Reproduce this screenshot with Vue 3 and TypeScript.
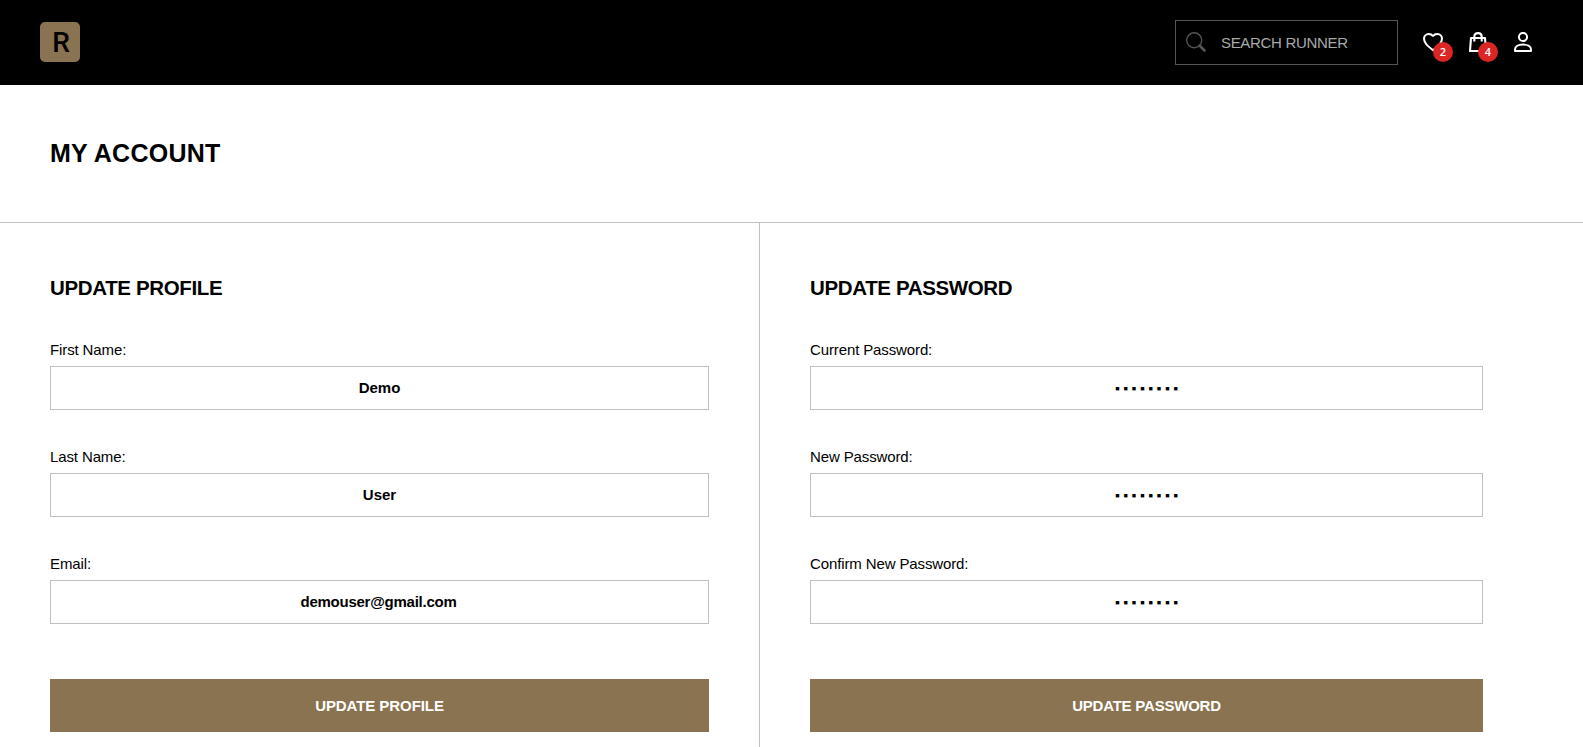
<script setup lang="ts">
interface Field {
  id: string
  label: string
  kind: string
  value: string
}

interface FormPanel {
  name: string
  title: string
  fields: Field[]
}

const mask = '■'.repeat(8)

const panels: FormPanel[] = [
  {
    name: 'profile',
    title: 'UPDATE PROFILE',
    fields: [
      { id: 'first-name', label: 'First Name:', kind: 'name', value: 'Demo' },
      { id: 'last-name', label: 'Last Name:', kind: 'name', value: 'User' },
      { id: 'email', label: 'Email:', kind: 'email', value: 'demouser@gmail.com' },
    ],
  },
  {
    name: 'password',
    title: 'UPDATE PASSWORD',
    fields: [
      { id: 'current-password', label: 'Current Password:', kind: 'masked', value: mask },
      { id: 'new-password', label: 'New Password:', kind: 'masked', value: mask },
      { id: 'confirm-password', label: 'Confirm New Password:', kind: 'masked', value: mask },
    ],
  },
]
</script>

<template>
  <div class="page">
    <header class="topbar">
      <a class="logo">R</a>
      <div class="tools">
        <label class="search">
          <svg width="20" height="20" viewBox="0 0 20 20" fill="none" stroke="#555">
            <circle cx="8.2" cy="8.2" r="7.5" stroke-width="1.4" />
            <path d="M13.8 13.8L18.5 18.5" stroke-width="2.7" stroke-linecap="round" />
          </svg>
          <input type="text" placeholder="SEARCH RUNNER" />
        </label>
        <nav class="icons">
          <a class="icon">
            <svg width="20" height="20" viewBox="0 0 20 20" fill="none" stroke="#fff" stroke-width="2" stroke-linejoin="round">
              <path d="M10 18.2C5 14.3 1 11.2 1 6.8C1 4 3 2 5.6 2C7.4 2 9 2.6 10 4C11 2.6 12.6 2 14.4 2C17 2 19 4 19 6.8C19 11.2 15 14.3 10 18.2Z" />
            </svg>
            <span class="badge">2</span>
          </a>
          <a class="icon">
            <svg width="20" height="20" viewBox="0 0 20 20" fill="none" stroke="#fff" stroke-width="2.1" stroke-linejoin="round">
              <path d="M3 6H17L18 19H2Z" />
              <path d="M6.3 9.5V5C6.3 2.6 7.8 1.1 10 1.1S13.7 2.6 13.7 5V9.5" />
            </svg>
            <span class="badge">4</span>
          </a>
          <a class="icon">
            <svg width="20" height="20" viewBox="0 0 20 20" fill="none" stroke="#fff" stroke-width="2">
              <circle cx="10" cy="5" r="4.1" />
              <path d="M2 19V17.6C2 14.6 5.4 12.6 10 12.6S18 14.6 18 17.6V19Z" stroke-linejoin="round" />
            </svg>
          </a>
        </nav>
      </div>
    </header>

    <h1 class="title">MY ACCOUNT</h1>

    <main class="panels">
      <form v-for="panel in panels" :key="panel.name" :class="['panel', panel.name]" @submit.prevent>
        <h2>{{ panel.title }}</h2>
        <div v-for="field in panel.fields" :key="field.id" class="field">
          <label :for="field.id">{{ field.label }}</label>
          <input :id="field.id" :class="field.kind" type="text" :value="field.value" />
        </div>
        <button type="submit">{{ panel.title }}</button>
      </form>
    </main>
  </div>
</template>

<style>
body {
  overflow: hidden;
  background: #fff;
}
</style>

<style scoped>
.page,
.page * {
  box-sizing: border-box;
}
.page {
  display: flex;
  flex-direction: column;
  height: 100vh;
  overflow: hidden;
  color: #000;
  font-family: "Liberation Sans", Arial, sans-serif;
  font-size: 15px;
}
.topbar {
  flex: none;
  display: flex;
  align-items: center;
  justify-content: space-between;
  height: 85px;
  padding: 0 50px 0 40px;
  background: #000;
}
.logo {
  width: 40px;
  height: 40px;
  margin-bottom: 1px;
  padding-left: 2px;
  border-radius: 5px;
  background: #8a7350;
  font: 500 28px/42px Roboto, sans-serif;
  text-align: center;
}
.tools {
  display: flex;
  align-items: center;
  gap: 25px;
}
.search {
  display: flex;
  align-items: center;
  gap: 15px;
  width: 223px;
  height: 45px;
  padding: 0 10px;
  border: 1px solid #555;
}
.search svg {
  flex: none;
  margin-bottom: 1px;
}
.search input {
  min-width: 0;
  width: 100%;
  padding: 0;
  border: 0;
  outline: 0;
  background: transparent;
  color: #fff;
  font: 15px "Liberation Sans", Arial, sans-serif;
  letter-spacing: -0.32px;
}
.search input::placeholder {
  color: #a9a9a9;
}
.icons {
  display: flex;
  gap: 25px;
}
.icon {
  position: relative;
  width: 20px;
  height: 20px;
  margin-bottom: 1px;
}
.icon svg {
  display: block;
}
.badge {
  position: absolute;
  left: 10px;
  top: 10px;
  width: 20px;
  height: 20px;
  border-radius: 50%;
  background: #dc2626;
  color: #fff;
  font: 600 11px/20px "Open Sans", sans-serif;
  text-align: center;
}
.title {
  flex: none;
  height: 138px;
  margin: 0;
  padding: 0 50px;
  border-bottom: 1px solid #c0c0c0;
  font-size: 25px;
  line-height: 137px;
  letter-spacing: 0.25px;
}
.panels {
  flex: 1;
  display: flex;
}
.panel {
  width: 760px;
  padding: 50px 50px 0;
}
.profile {
  border-right: 1px solid #c0c0c0;
}
.password {
  width: 773px;
}
.panel h2 {
  height: 28px;
  margin: 0 0 40px;
  font-size: 20.5px;
  line-height: 30px;
  letter-spacing: -0.36px;
}
.field {
  display: flex;
  flex-direction: column;
  gap: 8px;
  margin-bottom: 38px;
}
.field label {
  height: 17px;
  line-height: 17px;
  letter-spacing: -0.12px;
}
.field input {
  height: 44px;
  padding: 0 10px 2px;
  border: 1px solid #c0c0c0;
  outline: 0;
  background: #fff;
  color: #000;
  font: bold 15px "Liberation Sans", Arial, sans-serif;
  text-align: center;
}
.field .email {
  padding-right: 12px;
  letter-spacing: -0.25px;
}
.field .masked {
  padding: 0 10px 0 14px;
  font-size: 7px;
  letter-spacing: 4.1px;
}
.panel button {
  display: block;
  width: 100%;
  height: 53px;
  margin-top: 55px;
  border: 0;
  background: #8a7350;
  color: #fff;
  font: bold 15px "Liberation Sans", Arial, sans-serif;
  letter-spacing: -0.07px;
}
.password button {
  letter-spacing: -0.22px;
}
</style>
